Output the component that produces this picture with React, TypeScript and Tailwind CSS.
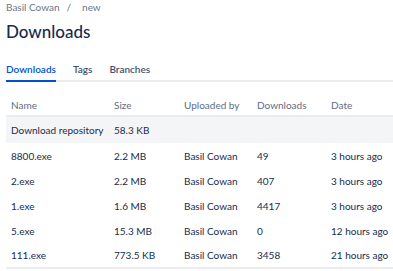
const rows = [
  { name: "8800.exe", size: "2.2 MB", by: "Basil Cowan", downloads: "49", date: "3 hours ago" },
  { name: "2.exe", size: "2.2 MB", by: "Basil Cowan", downloads: "407", date: "3 hours ago" },
  { name: "1.exe", size: "1.6 MB", by: "Basil Cowan", downloads: "4417", date: "3 hours ago" },
  { name: "5.exe", size: "15.3 MB", by: "Basil Cowan", downloads: "0", date: "12 hours ago" },
  { name: "111.exe", size: "773.5 KB", by: "Basil Cowan", downloads: "3458", date: "21 hours ago" },
];

export default function App() {
  return (
    <div
      className="w-[393px] h-[271px] overflow-hidden bg-white pl-[6px] text-[#172b4d]"
      style={{ fontFamily: 'Lato, "Liberation Sans", sans-serif' }}
    >
      {/* Breadcrumb */}
      <div className="flex items-center h-[14px] text-[10px] leading-[14px] text-[#6b778c]">
        <span>Basil Cowan</span>
        <span className="ml-[7px] mr-[11px]">/</span>
        <span>new</span>
      </div>

      <h1 className="mt-[6px] h-[24px] text-[17px] leading-[24px] font-medium">Downloads</h1>

      {/* Tabs */}
      <div className="mt-[18px] flex border-b-2 border-[#ebecf0] text-[10px] font-semibold">
        <div className="pb-[3px] -mb-[2px] border-b-2 border-[#0052cc] text-[#0052cc]">Downloads</div>
        <div className="ml-[17px] pb-[3px] text-[#42526e]">Tags</div>
        <div className="ml-[17px] pb-[3px] text-[#42526e]">Branches</div>
      </div>

      {/* Table */}
      <table className="mt-[12px] w-[387px] table-fixed border-collapse text-[10px] leading-[14px]">
        <colgroup>
          <col className="w-[108px]" />
          <col className="w-[70px]" />
          <col className="w-[73px]" />
          <col className="w-[74px]" />
          <col />
        </colgroup>
        <thead>
          <tr className="h-[22px] border-b-2 border-[#ebecf0] text-[#5e6c84] text-left">
            <th className="pl-[5px] p-0 font-normal">Name</th>
            <th className="p-0 font-normal">Size</th>
            <th className="p-0 font-normal">Uploaded by</th>
            <th className="p-0 font-normal">Downloads</th>
            <th className="p-0 font-normal">Date</th>
          </tr>
        </thead>
        <tbody>
          <tr className="h-[27px] bg-[#f4f5f7]">
            <td className="pl-[5px] whitespace-nowrap">Download repository</td>
            <td>58.3 KB</td>
            <td />
            <td />
            <td />
          </tr>
          {rows.map((r) => (
            <tr key={r.name} className="h-[25px]">
              <td className="pl-[5px]">{r.name}</td>
              <td>{r.size}</td>
              <td className="whitespace-nowrap">{r.by}</td>
              <td>{r.downloads}</td>
              <td className="whitespace-nowrap">{r.date}</td>
            </tr>
          ))}
          <tr className="border-t-2 border-[#ebecf0]">
            <td colSpan={5} className="h-[4px]" />
          </tr>
        </tbody>
      </table>
    </div>
  );
}
